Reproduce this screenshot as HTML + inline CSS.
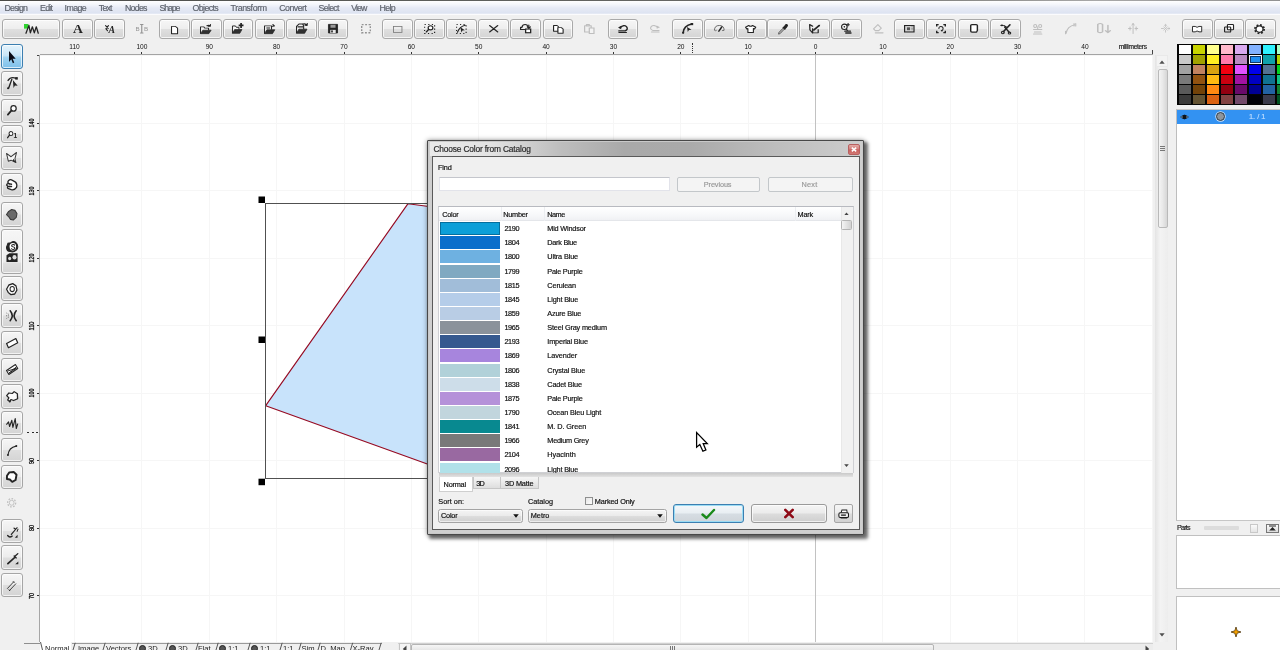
<!DOCTYPE html>
<html><head><meta charset="utf-8"><title>Choose Color from Catalog</title><style>
*{box-sizing:border-box}
html,body{margin:0;padding:0}
body{width:1280px;height:650px;overflow:hidden;position:relative;background:#f0f0f0;font-family:"Liberation Sans",sans-serif;font-size:9px;color:#222}
.a{position:absolute}
.menubar{left:-10px;top:1.2px;width:1300px;height:13.6px;background:linear-gradient(#ffffff 0%,#f4f6fb 25%,#e6eaf5 50%,#dde3f1 88%,#fbfbfd 93%,#fbfbfd 100%)}

.topstrip{left:-10px;top:-10px;width:1300px;height:11.3px;background:linear-gradient(90deg,#4a4a48 0%,#5a5c58 30%,#6a6a68 60%,#8a8a88 75%,#a8a8a8 85%,#909090 100%)}
.tb{position:absolute;top:19px;height:19.6px;width:30.6px;border:1px solid #a9a9a9;border-radius:3px;background:linear-gradient(#f6f6f6 0%,#eeeeee 48%,#dfdfdf 52%,#d4d4d4 100%);box-shadow:inset 0 0 0 1px rgba(255,255,255,.75)}
.tb svg,.ti svg{position:absolute;left:50%;top:50%;width:13px;height:13px;margin:-6.5px 0 0 -6.5px;overflow:visible}
.ti{position:absolute;top:19.5px;height:19px;width:30px;opacity:.32}
.lb{position:absolute;left:1.4px;width:21.4px;border:1px solid #a6a6a6;border-radius:3px;background:linear-gradient(#f6f6f6 0%,#ececec 48%,#dedede 52%,#d4d4d4 100%);box-shadow:inset 0 0 0 1px rgba(255,255,255,.7)}
.lb.sel{border-color:#3c7fb1;background:linear-gradient(#e6f4fc 0%,#c9e6f8 45%,#9fd2f0 55%,#7ec0ea 100%)}
.lb svg,.li svg{position:absolute;left:50%;top:50%;width:13px;height:13px;margin:-6.5px 0 0 -6.5px;overflow:visible}
.li{position:absolute;left:2px;width:21px;opacity:.3}
.rt{position:absolute;font-size:6.6px;color:#111;white-space:nowrap}
</style></head><body>
<div id="w" style="position:absolute;left:-10px;top:-10px;width:1300px;height:670px;background:#f0f0f0;filter:blur(0.4px)"><div style="position:absolute;left:10px;top:10px;width:1280px;height:650px">
<div class="a topstrip"></div>
<div class="a menubar"></div>
<div class="a" style="left:4.5px;top:3.2px;font-size:8.8px;line-height:10.12px;letter-spacing:-0.78px;color:#5f646e;white-space:nowrap;-webkit-text-stroke:0.18px currentColor;">Design</div>
<div class="a" style="left:40.0px;top:3.2px;font-size:8.8px;line-height:10.12px;letter-spacing:-0.72px;color:#5f646e;white-space:nowrap;-webkit-text-stroke:0.18px currentColor;">Edit</div>
<div class="a" style="left:64.5px;top:3.2px;font-size:8.8px;line-height:10.12px;letter-spacing:-0.55px;color:#5f646e;white-space:nowrap;-webkit-text-stroke:0.18px currentColor;">Image</div>
<div class="a" style="left:98.8px;top:3.2px;font-size:8.8px;line-height:10.12px;letter-spacing:-0.80px;color:#5f646e;white-space:nowrap;-webkit-text-stroke:0.18px currentColor;">Text</div>
<div class="a" style="left:125.0px;top:3.2px;font-size:8.8px;line-height:10.12px;letter-spacing:-0.73px;color:#5f646e;white-space:nowrap;-webkit-text-stroke:0.18px currentColor;">Nodes</div>
<div class="a" style="left:159.5px;top:3.2px;font-size:8.8px;line-height:10.12px;letter-spacing:-1.11px;color:#5f646e;white-space:nowrap;-webkit-text-stroke:0.18px currentColor;">Shape</div>
<div class="a" style="left:192.5px;top:3.2px;font-size:8.8px;line-height:10.12px;letter-spacing:-0.60px;color:#5f646e;white-space:nowrap;-webkit-text-stroke:0.18px currentColor;">Objects</div>
<div class="a" style="left:230.5px;top:3.2px;font-size:8.8px;line-height:10.12px;letter-spacing:-0.41px;color:#5f646e;white-space:nowrap;-webkit-text-stroke:0.18px currentColor;">Transform</div>
<div class="a" style="left:279.2px;top:3.2px;font-size:8.8px;line-height:10.12px;letter-spacing:-0.51px;color:#5f646e;white-space:nowrap;-webkit-text-stroke:0.18px currentColor;">Convert</div>
<div class="a" style="left:318.5px;top:3.2px;font-size:8.8px;line-height:10.12px;letter-spacing:-0.69px;color:#5f646e;white-space:nowrap;-webkit-text-stroke:0.18px currentColor;">Select</div>
<div class="a" style="left:351.2px;top:3.2px;font-size:8.8px;line-height:10.12px;letter-spacing:-0.89px;color:#5f646e;white-space:nowrap;-webkit-text-stroke:0.18px currentColor;">View</div>
<div class="a" style="left:379.5px;top:3.2px;font-size:8.8px;line-height:10.12px;letter-spacing:-0.62px;color:#5f646e;white-space:nowrap;-webkit-text-stroke:0.18px currentColor;">Help</div>
<div class="tb" style="left:2px;width:58px"></div>
<svg class="a" style="left:23.90px;top:23.70px;overflow:visible;" width="14.90" height="9.90" viewBox="0.5 2.5 15.15 10.65" preserveAspectRatio="none"><rect x="0.5" y="2.5" width="4.5" height="5" fill="#2fd22f"/><path d="M2.5,12.5 L5.5,4 L7,12 L9,5.5 L11,12 L13,5.5 L15,12.5" fill="none" stroke="#242424" stroke-width="1.3" stroke-linecap="round" stroke-linejoin="round"/></svg>
<div class="tb" style="left:62.1px"></div>
<svg class="a" style="left:73.10px;top:25.20px;overflow:visible;" width="9.70" height="7.70" viewBox="3.05 3.95 9.90 9.25" preserveAspectRatio="none"><text x="8" y="13.2" text-anchor="middle" font-family="Liberation Serif" font-weight="bold" font-size="14" fill="#242424">A</text></svg>
<div class="tb" style="left:94.2px"></div>
<svg class="a" style="left:105.00px;top:24.80px;overflow:visible;" width="9.70" height="8.10" viewBox="1.25 2.75 12.85 10.25" preserveAspectRatio="none"><text x="10.3" y="13" text-anchor="middle" font-family="Liberation Serif" font-style="italic" font-weight="bold" font-size="13" fill="#242424">A</text><path d="M2,3.5 L5.5,7 M5.8,3.5 L2.5,7.5 L4.5,10" fill="none" stroke="#242424" stroke-width="1.5" stroke-linecap="round"/></svg>
<svg class="a" style="left:136.30px;top:24.40px;overflow:visible;opacity:0.45;" width="11.80" height="9.40" viewBox="1.55 1.35 13.25 13.30" preserveAspectRatio="none"><path d="M8,2 V14 M6.5,2 H9.5 M6.5,14 H9.5" fill="none" stroke="#242424" stroke-width="1.3" stroke-linecap="round" stroke-linejoin="round"/><text x="1" y="11.5" font-family="Liberation Sans" font-size="7" fill="#242424">B</text><text x="10.5" y="11.5" font-family="Liberation Sans" font-size="7" fill="#242424">B</text></svg>
<div class="tb" style="left:159.1px"></div>
<svg class="a" style="left:171.00px;top:25.60px;overflow:visible;" width="7.10" height="8.20" viewBox="3.85 1.85 8.80 12.30" preserveAspectRatio="none"><path d="M4.5,2.5 H9.5 L12,5 V13.5 H4.5 Z" fill="#fff" stroke="#242424" stroke-width="1.3" stroke-linejoin="round"/></svg>
<div class="tb" style="left:191.0px"></div>
<svg class="a" style="left:200.40px;top:24.40px;overflow:visible;" width="11.50" height="10.00" viewBox="1.95 1.35 12.45 12.05" preserveAspectRatio="none"><path d="M2.5,13 V4.8 H6 L7,6.3 H11.2 V8.8" fill="#f4f4f4" stroke="#242424" stroke-width="1.1" stroke-linejoin="round"/><path d="M2.5,13 L5,8.8 H14 L11.5,13 Z" fill="#303030" stroke="#242424" stroke-width=".8" stroke-linejoin="round"/><path d="M9.5,3.5 Q11.5,2 13,4 M13,4 l0.3,-2 M13,4 l-2,0" fill="none" stroke="#242424" stroke-width="1.3" stroke-linecap="round" stroke-linejoin="round"/></svg>
<div class="tb" style="left:222.8px"></div>
<svg class="a" style="left:231.60px;top:23.10px;overflow:visible;" width="11.50" height="10.70" viewBox="1.45 1.5 13.35 11.90" preserveAspectRatio="none"><path d="M2,13 V4.8 H5.5 L6.5,6.3 H9.5 V8.8" fill="#f4f4f4" stroke="#242424" stroke-width="1.1" stroke-linejoin="round"/><path d="M2,13 L4.5,8.8 H13 L10.5,13 Z" fill="#303030" stroke="#242424" stroke-width=".8" stroke-linejoin="round"/><path d="M12,1.5 V7 M9.2,4.2 H14.8" fill="none" stroke="#242424" stroke-width="2"/></svg>
<div class="tb" style="left:254.6px"></div>
<svg class="a" style="left:263.80px;top:24.40px;overflow:visible;" width="11.20" height="10.00" viewBox="2.45 1.85 11.95 11.55" preserveAspectRatio="none"><path d="M3,13 V4 H10.5 V8.5" fill="#f4f4f4" stroke="#242424" stroke-width="1.1" stroke-linejoin="round"/><path d="M3,13 L5.5,8.5 H14 L11.5,13 Z" fill="#303030" stroke="#242424" stroke-width=".8" stroke-linejoin="round"/><rect x="5" y="5.3" width="4" height="2.4" fill="#888"/><path d="M12,2.5 l1.5,1.5 l-2,0.5" fill="none" stroke="#242424" stroke-width="1.3" stroke-linecap="round" stroke-linejoin="round"/></svg>
<div class="tb" style="left:286.1px"></div>
<svg class="a" style="left:295.60px;top:23.10px;overflow:visible;" width="11.90" height="10.70" viewBox="1.95 1.85 12.50 11.55" preserveAspectRatio="none"><path d="M2.5,13 V5.5 L5,3 H9 L10,5 V8.5" fill="#f4f4f4" stroke="#242424" stroke-width="1.1" stroke-linejoin="round"/><path d="M2.5,13 L5,8.5 H13.5 L11,13 Z" fill="#303030" stroke="#242424" stroke-width=".8" stroke-linejoin="round"/><path d="M4,6 H9.5 M9.5,3 Q12,2 13.5,4.5 M13.5,4.5 l0.3,-2 M13.5,4.5 l-2,-0.2" fill="none" stroke="#242424" stroke-width="1.3" stroke-linecap="round" stroke-linejoin="round"/></svg>
<div class="tb" style="left:317.7px"></div>
<svg class="a" style="left:328.10px;top:24.40px;overflow:visible;" width="10.00" height="9.40" viewBox="2.5 2.0 11.00 12.00" preserveAspectRatio="none"><path d="M3,2.5 H13 V13.5 H3 Z" fill="#242424" stroke="#242424" stroke-width="1" stroke-linejoin="round"/><rect x="5.2" y="3" width="5.6" height="3.8" fill="#9a9a9a"/><rect x="5" y="9.5" width="6" height="4" fill="#e8e8e8"/><rect x="6" y="10.2" width="1.8" height="2.6" fill="#242424"/></svg>
<svg class="a" style="left:360.60px;top:24.40px;overflow:visible;opacity:0.45;" width="10.00" height="9.40" viewBox="2.2 2.2 11.60 11.60" preserveAspectRatio="none"><rect x="3" y="3" width="10" height="10" fill="none" stroke="#242424" stroke-width="1.6" stroke-dasharray="2.2 1.8"/></svg>
<div class="tb" style="left:382.2px"></div>
<svg class="a" style="left:392.50px;top:25.60px;overflow:visible;" width="9.40" height="6.90" viewBox="3.0 4.0 10.50 8.50" preserveAspectRatio="none"><rect x="3.5" y="4.5" width="9.5" height="7.5" fill="none" stroke="#7c7c7c" stroke-width="1"/></svg>
<div class="tb" style="left:414.2px"></div>
<svg class="a" style="left:423.80px;top:23.80px;overflow:visible;" width="11.20" height="10.00" viewBox="1.85 1.85 12.30 12.30" preserveAspectRatio="none"><rect x="2.5" y="2.5" width="11" height="11" fill="none" stroke="#242424" stroke-width="1.3" stroke-dasharray="1.3 2.7"/><circle cx="9" cy="6.5" r="2.6" fill="#fff" stroke="#242424" stroke-width="1.3"/><path d="M7,8.5 L4.5,11.5" fill="none" stroke="#242424" stroke-width="1.7" stroke-linecap="round" stroke-linejoin="round"/></svg>
<div class="tb" style="left:446.0px"></div>
<svg class="a" style="left:455.60px;top:23.80px;overflow:visible;" width="10.70" height="10.00" viewBox="1.85 1.85 12.30 12.30" preserveAspectRatio="none"><rect x="2.5" y="2.5" width="11" height="11" fill="none" stroke="#242424" stroke-width="1.3" stroke-dasharray="1.3 2.7"/><path d="M3.5,12 Q6,5 12.5,3.5" fill="none" stroke="#242424" stroke-width="1.3" stroke-linecap="round" stroke-linejoin="round"/><path d="M7,6 L12,9.5 L9.3,9.9 L8,12.3 Z" fill="#242424"/></svg>
<div class="tb" style="left:478.2px"></div>
<svg class="a" style="left:489.40px;top:25.00px;overflow:visible;" width="9.40" height="7.50" viewBox="2.65 2.65 10.70 10.70" preserveAspectRatio="none"><path d="M3.5,3.5 L12.5,12.5 M12.5,3.5 L3.5,12.5" fill="none" stroke="#242424" stroke-width="1.7" stroke-linecap="round" stroke-linejoin="round"/></svg>
<div class="tb" style="left:510.2px"></div>
<svg class="a" style="left:520.00px;top:23.80px;overflow:visible;" width="11.30" height="9.30" viewBox="1.35 2.35 12.35 11.35" preserveAspectRatio="none"><path d="M2,9 V6.5 H3.5 Q4,3 7,3 Q9.5,3 10,5.5" fill="none" stroke="#242424" stroke-width="1.3" stroke-linecap="round" stroke-linejoin="round"/><path d="M2,9 H6.5" fill="none" stroke="#242424" stroke-width="1.3" stroke-linecap="round" stroke-linejoin="round"/><rect x="7.5" y="8.5" width="5.5" height="4.5" fill="#fff" stroke="#242424" stroke-width="1.4"/><path d="M11,3.5 V7.5 M9.3,5.8 L11,7.8 L12.7,5.8" fill="none" stroke="#242424" stroke-width="1.3" stroke-linecap="round" stroke-linejoin="round"/></svg>
<div class="tb" style="left:542.9px"></div>
<svg class="a" style="left:553.10px;top:25.00px;overflow:visible;" width="10.70" height="8.80" viewBox="1.85 1.85 12.30 12.30" preserveAspectRatio="none"><path d="M2.5,2.5 H6.5 L8,4 V10.5 H2.5 Z" fill="#fff" stroke="#242424" stroke-width="1.3" stroke-linejoin="round"/><path d="M7.5,5.5 H11.5 L13.5,7.5 V13.5 H7.5 Z" fill="#fff" stroke="#242424" stroke-width="1.3" stroke-linejoin="round"/></svg>
<svg class="a" style="left:584.40px;top:24.40px;overflow:visible;opacity:0.24;" width="10.60" height="10.00" viewBox="2.35 1.85 11.30 12.80" preserveAspectRatio="none"><path d="M3,4 H10 V12 H3 Z M5,2.5 H8 V4.5 H5 Z" fill="none" stroke="#242424" stroke-width="1.3" stroke-linecap="round" stroke-linejoin="round"/><path d="M8,7 H13 V14 H8 Z" fill="#fff" stroke="#242424" stroke-width="1.3"/></svg>
<div class="tb" style="left:607.7px"></div>
<svg class="a" style="left:618.10px;top:25.00px;overflow:visible;" width="10.00" height="8.10" viewBox="2.0 2.95 11.80 10.40" preserveAspectRatio="none"><path d="M4.5,6.5 Q9,2 12,5 Q14.5,8.5 10.5,10.5 H3" fill="none" stroke="#242424" stroke-width="1.7" stroke-linecap="round" stroke-linejoin="round"/><path d="M2,6.2 L6,4 L5.8,8.3 Z" fill="#242424"/><path d="M3,12.7 H12" fill="none" stroke="#242424" stroke-width="1.3" stroke-linecap="round" stroke-linejoin="round"/></svg>
<svg class="a" style="left:650.00px;top:25.00px;overflow:visible;opacity:0.24;" width="10.00" height="7.50" viewBox="2.4 3.15 11.60 10.20" preserveAspectRatio="none"><path d="M11.5,6.5 Q7,2 4,5 Q1.5,8.5 5.5,10.5 H13" fill="none" stroke="#242424" stroke-width="1.3" stroke-linecap="round" stroke-linejoin="round"/><path d="M14,6.2 L10,4 L10.2,8.3 Z" fill="#242424"/><path d="M4,12.7 H13" fill="none" stroke="#242424" stroke-width="1.3" stroke-linecap="round" stroke-linejoin="round"/></svg>
<div class="tb" style="left:672.3px"></div>
<svg class="a" style="left:681.90px;top:23.10px;overflow:visible;" width="11.20" height="10.70" viewBox="2.3 1.8 11.60 12.90" preserveAspectRatio="none"><path d="M3.5,13.5 Q4,5 12.5,3" fill="none" stroke="#242424" stroke-width="1.7" stroke-linecap="round" stroke-linejoin="round"/><circle cx="3.5" cy="13.5" r="1.2" fill="#242424"/><rect x="11.3" y="1.8" width="2.6" height="2.6" fill="#242424"/><path d="M7.5,6.5 L12.2,10 L9.5,10.2 L8.3,12.6 Z" fill="#242424"/></svg>
<div class="tb" style="left:704.2px"></div>
<svg class="a" style="left:713.80px;top:25.00px;overflow:visible;" width="10.60" height="6.90" viewBox="1.95 3.95 12.10 7.90" preserveAspectRatio="none"><path d="M2.5,10 Q2.5,4.5 8,4.5 Q13.5,4.5 13.5,10" fill="none" stroke="#666" stroke-width="1.1"/><path d="M2.5,10 Q4,11 5,10 M13.5,10 Q12,11 11,10" fill="none" stroke="#666" stroke-width="1"/><path d="M7.5,11 L10.8,6.2" fill="none" stroke="#242424" stroke-width="1.7" stroke-linecap="round" stroke-linejoin="round"/></svg>
<div class="tb" style="left:736.0px"></div>
<svg class="a" style="left:745.00px;top:25.00px;overflow:visible;" width="11.30" height="8.10" viewBox="0.8 2.3 14.40 11.40" preserveAspectRatio="none"><path d="M5.5,3 Q8,5 10.5,3 L14.5,5.5 L13,8 L11.5,7.2 V13 H4.5 V7.2 L3,8 L1.5,5.5 Z" fill="#fff" stroke="#242424" stroke-width="1.4" stroke-linejoin="round"/></svg>
<div class="tb" style="left:767.4px"></div>
<svg class="a" style="left:777.50px;top:23.80px;overflow:visible;" width="10.00" height="10.60" viewBox="2.45 1.5 12.35 12.55" preserveAspectRatio="none"><path d="M3,13.5 L3.5,11.5 L9,6 L10.5,7.5 L5,13 Z" fill="#a8a8a8" stroke="#444" stroke-width=".8"/><path d="M8.5,5 L11.5,8 M9.5,6 L12,2.6 Q13.6,1.8 14,3.2 Q14.2,4.2 10.8,7 Z" fill="#242424" stroke="#242424" stroke-width="1.6" stroke-linejoin="round"/></svg>
<div class="tb" style="left:799.2px"></div>
<svg class="a" style="left:808.80px;top:24.40px;overflow:visible;" width="11.20" height="9.40" viewBox="2.35 2.15 11.25 11.70" preserveAspectRatio="none"><path d="M3,2.8 L3.3,9.6 L6,13.2 M3,2.8 L6,5" fill="none" stroke="#242424" stroke-width="1.3" stroke-linejoin="round" stroke-linecap="round"/><path d="M6,7.4 V13.2 H11.6 V8.6" fill="none" stroke="#242424" stroke-width="1.2" stroke-linejoin="round"/><path d="M7.2,9.6 L12,4.6" fill="none" stroke="#242424" stroke-width="2" stroke-linecap="round"/><path d="M11.2,3.4 L13.6,3 L13.2,5.4 Z" fill="#242424"/></svg>
<div class="tb" style="left:831.2px"></div>
<svg class="a" style="left:840.60px;top:23.10px;overflow:visible;" width="10.70" height="10.70" viewBox="2.9 1.8 11.45 11.75" preserveAspectRatio="none"><circle cx="6.5" cy="6" r="3" fill="#fafafa" stroke="#242424" stroke-width="1.2"/><circle cx="6.5" cy="6" r="0.9" fill="#242424"/><path d="M10.5,1.8 V5.4 M8.8,3.6 H12.2" fill="none" stroke="#242424" stroke-width="1.1"/><path d="M8.6,8.4 L10,10.4" fill="none" stroke="#242424" stroke-width="1.3"/><path d="M7,10.8 H13 M8,12.8 H13.6" fill="none" stroke="#242424" stroke-width="1.5" stroke-linecap="round"/></svg>
<svg class="a" style="left:872.50px;top:24.40px;overflow:visible;opacity:0.24;" width="10.60" height="9.40" viewBox="2.35 2.35 12.30 10.80" preserveAspectRatio="none"><path d="M3,8 L8,3 L12,7 L9,10 H5 Z" fill="none" stroke="#242424" stroke-width="1.3" stroke-linecap="round" stroke-linejoin="round"/><path d="M5,12.5 H14" fill="none" stroke="#242424" stroke-width="1.3" stroke-linecap="round" stroke-linejoin="round"/></svg>
<div class="tb" style="left:894.2px"></div>
<svg class="a" style="left:903.80px;top:25.00px;overflow:visible;" width="10.60" height="7.50" viewBox="1.25 2.75 13.50 10.50" preserveAspectRatio="none"><rect x="2" y="3.5" width="12" height="9" fill="#d8d8d8" stroke="#242424" stroke-width="1.5"/><rect x="5" y="6" width="4" height="4" fill="#555"/><path d="M11.5,5 V11" stroke="#242424" stroke-width="1" stroke-dasharray="1 1"/></svg>
<div class="tb" style="left:925.8px"></div>
<svg class="a" style="left:935.60px;top:23.80px;overflow:visible;" width="10.00" height="9.30" viewBox="1.6 1.6 12.80 12.80" preserveAspectRatio="none"><path d="M2.5,5 V2.5 H5 M11,2.5 H13.5 V5 M13.5,11 V13.5 H11 M5,13.5 H2.5 V11" fill="none" stroke="#242424" stroke-width="1.8"/><path d="M5.3,8 Q5.3,5 8,5 Q10.7,5 10.7,8 Q10.7,10.5 8.5,10.8" fill="none" stroke="#242424" stroke-width="1.3" stroke-linecap="round" stroke-linejoin="round"/><path d="M9.5,9.3 L7.5,11 L9.8,12.2 Z" fill="#242424"/></svg>
<div class="tb" style="left:958.2px"></div>
<svg class="a" style="left:970.00px;top:24.40px;overflow:visible;" width="8.10" height="8.70" viewBox="3.15 1.65 9.70 12.70" preserveAspectRatio="none"><path d="M4,4 Q4,2.5 5.5,2.5 H10.5 Q12,2.5 12,4 V11 L11,13.5 H5.5 Q4,13.5 4,12 Z" fill="#fff" stroke="#242424" stroke-width="1.7" stroke-linejoin="round"/></svg>
<div class="tb" style="left:990.0px"></div>
<svg class="a" style="left:1000.00px;top:23.80px;overflow:visible;" width="11.30" height="10.60" viewBox="2.0 2.15 11.90 12.75" preserveAspectRatio="none"><path d="M2,4 Q4,1.5 6,4 Q4,6 2,4 Z" fill="#242424"/><path d="M6,4 L9,6" fill="none" stroke="#242424" stroke-width="1.3" stroke-linecap="round" stroke-linejoin="round"/><path d="M12.5,3 L5.5,11.5 M7,6 L11.5,12" fill="none" stroke="#242424" stroke-width="1.7" stroke-linecap="round" stroke-linejoin="round"/><circle cx="5" cy="12.5" r="1.5" fill="none" stroke="#242424" stroke-width="1.2"/><circle cx="12" cy="13" r="1.3" fill="none" stroke="#242424" stroke-width="1.2"/></svg>
<svg class="a" style="left:1032.50px;top:23.80px;overflow:visible;opacity:0.24;" width="9.40" height="10.60" viewBox="2.35 1.55 11.30 12.60" preserveAspectRatio="none"><circle cx="5" cy="4" r="1.8" fill="none" stroke="#242424" stroke-width="1.3" stroke-linecap="round" stroke-linejoin="round"/><circle cx="11" cy="4" r="1.8" fill="none" stroke="#242424" stroke-width="1.3" stroke-linecap="round" stroke-linejoin="round"/><path d="M3,8 H13 M4,11 H12 M3,13.5 H13 M8,5 V8" fill="none" stroke="#242424" stroke-width="1.3" stroke-linecap="round" stroke-linejoin="round"/></svg>
<svg class="a" style="left:1065.00px;top:23.10px;overflow:visible;opacity:0.24;" width="11.30" height="11.30" viewBox="1.35 0.85 13.30 13.80" preserveAspectRatio="none"><path d="M2.5,13.5 Q4,5 13,3" fill="none" stroke="#242424" stroke-width="1.3" stroke-linecap="round" stroke-linejoin="round"/><path d="M12,1.5 V4.5 M14,1.5 V4.5 M2,11 V14" fill="none" stroke="#242424" stroke-width="1.3" stroke-linecap="round" stroke-linejoin="round"/></svg>
<svg class="a" style="left:1097.20px;top:22.80px;overflow:visible;opacity:0.24;" width="14.10" height="10.20" viewBox="2.35 1.35 11.80 12.30" preserveAspectRatio="none"><path d="M3,3 Q5,1 7,3 V12 Q5,14 3,12 Z" fill="none" stroke="#242424" stroke-width="1.3" stroke-linecap="round" stroke-linejoin="round"/><path d="M11.5,4 V12.5 M9.5,10.5 L11.5,13 L13.5,10.5" fill="none" stroke="#242424" stroke-width="1.3" stroke-linecap="round" stroke-linejoin="round"/></svg>
<svg class="a" style="left:1128.40px;top:22.80px;overflow:visible;opacity:0.24;" width="10.20" height="11.00" viewBox="1.35 0.85 13.30 14.30" preserveAspectRatio="none"><path d="M8,1.5 V14.5 M6.5,3.5 L8,1.5 L9.5,3.5 M4,6 V10 M12,6 V10 M2,8 H5.5 M10.5,8 H14" fill="none" stroke="#242424" stroke-width="1.3" stroke-linecap="round" stroke-linejoin="round"/></svg>
<svg class="a" style="left:1160.50px;top:24.40px;overflow:visible;opacity:0.24;" width="9.30" height="8.60" viewBox="1.35 0.65 13.60 14.00" preserveAspectRatio="none"><path d="M8,2 V5 M8,11 V14 M2,8 H5 M11,8 H14 M5.5,5.5 L10.5,10.5 M10.5,5.5 L5.5,10.5 M6.5,2.8 L8,1.3 L9.5,2.8 M12.8,6.5 L14.3,8 L12.8,9.5" fill="none" stroke="#242424" stroke-width="1.3" stroke-linecap="round" stroke-linejoin="round"/></svg>
<div class="tb" style="left:1182.1px"></div>
<svg class="a" style="left:1191.70px;top:25.90px;overflow:visible;" width="10.20" height="6.30" viewBox="1.35 3.35 13.30 9.30" preserveAspectRatio="none"><path d="M2,4 H5.5 Q8,6.5 10.5,4 H14 V12 H10.5 Q8,9.5 5.5,12 H2 Z" fill="#fff" stroke="#242424" stroke-width="1.3" stroke-linejoin="round"/></svg>
<div class="tb" style="left:1213.6px"></div>
<svg class="a" style="left:1223.80px;top:24.40px;overflow:visible;" width="10.10" height="8.60" viewBox="1.8 1.8 12.40 12.40" preserveAspectRatio="none"><rect x="6" y="2.5" width="7.5" height="7.5" rx="1" fill="#fff" stroke="#242424" stroke-width="1.4"/><rect x="2.5" y="6" width="7.5" height="7.5" rx="1" fill="none" stroke="#242424" stroke-width="1.4"/></svg>
<div class="tb" style="left:1245.1px"></div>
<svg class="a" style="left:1254.20px;top:23.60px;overflow:visible;" width="11.00" height="10.20" viewBox="1.3 1.3 13.40 13.40" preserveAspectRatio="none"><circle cx="8" cy="8" r="4.3" fill="#fff" stroke="#242424" stroke-width="1.6"/><circle cx="8" cy="8" r="5.6" fill="none" stroke="#242424" stroke-width="2.2" stroke-dasharray="2.2 2.2"/></svg>
<div class="rt" style="left:64.5px;top:43.4px;width:20px;text-align:center">110</div>
<div class="a" style="left:74.0px;top:51.8px;width:1px;height:3.2px;background:#333"></div>
<div class="rt" style="left:131.9px;top:43.4px;width:20px;text-align:center">100</div>
<div class="a" style="left:141.4px;top:51.8px;width:1px;height:3.2px;background:#333"></div>
<div class="rt" style="left:199.3px;top:43.4px;width:20px;text-align:center">90</div>
<div class="a" style="left:208.8px;top:51.8px;width:1px;height:3.2px;background:#333"></div>
<div class="rt" style="left:266.6px;top:43.4px;width:20px;text-align:center">80</div>
<div class="a" style="left:276.1px;top:51.8px;width:1px;height:3.2px;background:#333"></div>
<div class="rt" style="left:334.0px;top:43.4px;width:20px;text-align:center">70</div>
<div class="a" style="left:343.5px;top:51.8px;width:1px;height:3.2px;background:#333"></div>
<div class="rt" style="left:401.3px;top:43.4px;width:20px;text-align:center">60</div>
<div class="a" style="left:410.8px;top:51.8px;width:1px;height:3.2px;background:#333"></div>
<div class="rt" style="left:468.7px;top:43.4px;width:20px;text-align:center">50</div>
<div class="a" style="left:478.2px;top:51.8px;width:1px;height:3.2px;background:#333"></div>
<div class="rt" style="left:536.1px;top:43.4px;width:20px;text-align:center">40</div>
<div class="a" style="left:545.6px;top:51.8px;width:1px;height:3.2px;background:#333"></div>
<div class="rt" style="left:603.4px;top:43.4px;width:20px;text-align:center">30</div>
<div class="a" style="left:612.9px;top:51.8px;width:1px;height:3.2px;background:#333"></div>
<div class="rt" style="left:670.8px;top:43.4px;width:20px;text-align:center">20</div>
<div class="a" style="left:680.3px;top:51.8px;width:1px;height:3.2px;background:#333"></div>
<div class="rt" style="left:738.1px;top:43.4px;width:20px;text-align:center">10</div>
<div class="a" style="left:747.6px;top:51.8px;width:1px;height:3.2px;background:#333"></div>
<div class="rt" style="left:805.5px;top:43.4px;width:20px;text-align:center">0</div>
<div class="a" style="left:815.0px;top:51.8px;width:1px;height:3.2px;background:#333"></div>
<div class="rt" style="left:872.9px;top:43.4px;width:20px;text-align:center">10</div>
<div class="a" style="left:882.4px;top:51.8px;width:1px;height:3.2px;background:#333"></div>
<div class="rt" style="left:940.2px;top:43.4px;width:20px;text-align:center">20</div>
<div class="a" style="left:949.7px;top:51.8px;width:1px;height:3.2px;background:#333"></div>
<div class="rt" style="left:1007.6px;top:43.4px;width:20px;text-align:center">30</div>
<div class="a" style="left:1017.1px;top:51.8px;width:1px;height:3.2px;background:#333"></div>
<div class="rt" style="left:1074.9px;top:43.4px;width:20px;text-align:center">40</div>
<div class="a" style="left:1084.4px;top:51.8px;width:1px;height:3.2px;background:#333"></div>
<div class="a" style="left:1118.8px;top:42.8px;font-size:6.6px;line-height:7.59px;letter-spacing:-0.33px;color:#222;white-space:nowrap;-webkit-text-stroke:0.18px currentColor;">millimeters</div>
<div class="a" style="left:1152px;top:50px;width:1px;height:4px;background:#444"></div>
<div class="a" style="left:692px;top:43px;width:0;height:10px;border-left:1px dotted #333"></div>
<div class="a" style="left:40px;top:54px;width:1113px;height:1px;background:#a4a4a4"></div>
<svg class="a" style="left:26px;top:115.4px;overflow:visible" width="10" height="16"><text transform="translate(7.9,8) rotate(-90)" text-anchor="middle" font-family="Liberation Sans" font-size="7.2" textLength="9.0" lengthAdjust="spacingAndGlyphs" fill="#000" stroke="#000" stroke-width="0.25">140</text></svg>
<div class="a" style="left:36.5px;top:122.9px;width:3.5px;height:1px;background:#333"></div>
<svg class="a" style="left:26px;top:182.9px;overflow:visible" width="10" height="16"><text transform="translate(7.9,8) rotate(-90)" text-anchor="middle" font-family="Liberation Sans" font-size="7.2" textLength="9.0" lengthAdjust="spacingAndGlyphs" fill="#000" stroke="#000" stroke-width="0.25">130</text></svg>
<div class="a" style="left:36.5px;top:190.4px;width:3.5px;height:1px;background:#333"></div>
<svg class="a" style="left:26px;top:250.3px;overflow:visible" width="10" height="16"><text transform="translate(7.9,8) rotate(-90)" text-anchor="middle" font-family="Liberation Sans" font-size="7.2" textLength="9.0" lengthAdjust="spacingAndGlyphs" fill="#000" stroke="#000" stroke-width="0.25">120</text></svg>
<div class="a" style="left:36.5px;top:257.8px;width:3.5px;height:1px;background:#333"></div>
<svg class="a" style="left:26px;top:317.8px;overflow:visible" width="10" height="16"><text transform="translate(7.9,8) rotate(-90)" text-anchor="middle" font-family="Liberation Sans" font-size="7.2" textLength="9.0" lengthAdjust="spacingAndGlyphs" fill="#000" stroke="#000" stroke-width="0.25">110</text></svg>
<div class="a" style="left:36.5px;top:325.3px;width:3.5px;height:1px;background:#333"></div>
<svg class="a" style="left:26px;top:385.3px;overflow:visible" width="10" height="16"><text transform="translate(7.9,8) rotate(-90)" text-anchor="middle" font-family="Liberation Sans" font-size="7.2" textLength="9.0" lengthAdjust="spacingAndGlyphs" fill="#000" stroke="#000" stroke-width="0.25">100</text></svg>
<div class="a" style="left:36.5px;top:392.8px;width:3.5px;height:1px;background:#333"></div>
<svg class="a" style="left:26px;top:452.8px;overflow:visible" width="10" height="16"><text transform="translate(7.9,8) rotate(-90)" text-anchor="middle" font-family="Liberation Sans" font-size="7.2" textLength="6.2" lengthAdjust="spacingAndGlyphs" fill="#000" stroke="#000" stroke-width="0.25">90</text></svg>
<div class="a" style="left:36.5px;top:460.2px;width:3.5px;height:1px;background:#333"></div>
<svg class="a" style="left:26px;top:520.2px;overflow:visible" width="10" height="16"><text transform="translate(7.9,8) rotate(-90)" text-anchor="middle" font-family="Liberation Sans" font-size="7.2" textLength="6.2" lengthAdjust="spacingAndGlyphs" fill="#000" stroke="#000" stroke-width="0.25">80</text></svg>
<div class="a" style="left:36.5px;top:527.7px;width:3.5px;height:1px;background:#333"></div>
<svg class="a" style="left:26px;top:587.7px;overflow:visible" width="10" height="16"><text transform="translate(7.9,8) rotate(-90)" text-anchor="middle" font-family="Liberation Sans" font-size="7.2" textLength="6.2" lengthAdjust="spacingAndGlyphs" fill="#000" stroke="#000" stroke-width="0.25">70</text></svg>
<div class="a" style="left:36.5px;top:595.2px;width:3.5px;height:1px;background:#333"></div>
<div class="a" style="left:26.5px;top:432px;width:12.5px;height:1px;background:repeating-linear-gradient(90deg,#2a2a2a 0,#2a2a2a 2.2px,transparent 2.2px,transparent 4.6px)"></div>
<div class="a" style="left:37px;top:55px;width:3px;height:1px;background:#444"></div>
<div class="a" id="canvas" style="left:40px;top:55px;width:1112.5px;height:586.5px;background:#fff;overflow:hidden">
<div class="a" style="left:-33.3px;top:0;width:1px;height:587px;background:#f6f6f6"></div><div class="a" style="left:34.0px;top:0;width:1px;height:587px;background:#f6f6f6"></div><div class="a" style="left:101.4px;top:0;width:1px;height:587px;background:#f6f6f6"></div><div class="a" style="left:168.8px;top:0;width:1px;height:587px;background:#f6f6f6"></div><div class="a" style="left:236.1px;top:0;width:1px;height:587px;background:#f6f6f6"></div><div class="a" style="left:303.5px;top:0;width:1px;height:587px;background:#f6f6f6"></div><div class="a" style="left:370.8px;top:0;width:1px;height:587px;background:#f6f6f6"></div><div class="a" style="left:438.2px;top:0;width:1px;height:587px;background:#f6f6f6"></div><div class="a" style="left:505.6px;top:0;width:1px;height:587px;background:#f6f6f6"></div><div class="a" style="left:572.9px;top:0;width:1px;height:587px;background:#f6f6f6"></div><div class="a" style="left:640.3px;top:0;width:1px;height:587px;background:#f6f6f6"></div><div class="a" style="left:707.6px;top:0;width:1px;height:587px;background:#f6f6f6"></div><div class="a" style="left:842.4px;top:0;width:1px;height:587px;background:#f6f6f6"></div><div class="a" style="left:909.7px;top:0;width:1px;height:587px;background:#f6f6f6"></div><div class="a" style="left:977.1px;top:0;width:1px;height:587px;background:#f6f6f6"></div><div class="a" style="left:1044.4px;top:0;width:1px;height:587px;background:#f6f6f6"></div><div class="a" style="left:1111.8px;top:0;width:1px;height:587px;background:#f6f6f6"></div><div class="a" style="left:0;top:0.4px;width:1113px;height:1px;background:#f6f6f6"></div><div class="a" style="left:0;top:67.9px;width:1113px;height:1px;background:#f6f6f6"></div><div class="a" style="left:0;top:135.4px;width:1113px;height:1px;background:#f6f6f6"></div><div class="a" style="left:0;top:202.8px;width:1113px;height:1px;background:#f6f6f6"></div><div class="a" style="left:0;top:270.3px;width:1113px;height:1px;background:#f6f6f6"></div><div class="a" style="left:0;top:337.8px;width:1113px;height:1px;background:#f6f6f6"></div><div class="a" style="left:0;top:405.2px;width:1113px;height:1px;background:#f6f6f6"></div><div class="a" style="left:0;top:472.7px;width:1113px;height:1px;background:#f6f6f6"></div><div class="a" style="left:0;top:540.2px;width:1113px;height:1px;background:#f6f6f6"></div><div class="a" style="left:0;top:607.7px;width:1113px;height:1px;background:#f6f6f6"></div>
<div class="a" style="left:775.0px;top:0;width:1px;height:587px;background:#c2c2c2"></div>
<svg class="a" style="left:0;top:0" width="1113" height="587" viewBox="40 55 1113 587"><polygon points="408,203.7 480,213.2 480,483 265.7,405.7" fill="#c8e3fb" stroke="#960a22" stroke-width="1.15" stroke-linejoin="round"/><rect x="265.5" y="203.5" width="300" height="275" fill="none" stroke="#505050" stroke-width="1"/><rect x="258.5" y="196.5" width="6.5" height="6.5" fill="#000"/><rect x="258.5" y="336.5" width="6.5" height="6.5" fill="#000"/><rect x="258.5" y="478.7" width="6.5" height="6.5" fill="#000"/></svg>
</div>
<div class="a" style="left:39px;top:55px;width:1px;height:587px;background:#a6a6a6"></div>
<div class="lb sel" style="top:44px;height:25px"></div>
<svg class="a" style="left:8.60px;top:51.10px;overflow:visible;" width="6.70" height="12.30" viewBox="4.5 1.5 8.30 13.00" preserveAspectRatio="none"><path d="M4.5,1.5 V13 L7.3,10.3 L9.3,14.5 L11,13.7 L9,9.7 H12.8 Z" fill="#0a0a14"/></svg>
<div class="lb" style="top:71.3px;height:24.7px"></div>
<svg class="a" style="left:6.90px;top:76.90px;overflow:visible;" width="10.80" height="12.30" viewBox="2.5 2.2 10.10 11.80" preserveAspectRatio="none"><path d="M3.5,5.5 Q6,1.5 11,3.5" fill="none" stroke="#242424" stroke-width="1.3" stroke-linecap="round" stroke-linejoin="round"/><rect x="10.2" y="2.3" width="2.4" height="2.4" fill="#242424"/><path d="M7,4.5 L4,13" fill="none" stroke="#242424" stroke-width="1.3" stroke-linecap="round" stroke-linejoin="round"/><path d="M8,5 L12.5,10.5 L9.9,10.3 L8.6,12.8 Z" fill="#242424"/><circle cx="3.5" cy="13" r="1" fill="#242424"/></svg>
<div class="lb" style="top:98.5px;height:24.2px"></div>
<svg class="a" style="left:6.90px;top:105.20px;overflow:visible;" width="9.80" height="10.60" viewBox="1.9 1.45 12.15 12.65" preserveAspectRatio="none"><circle cx="10" cy="5.5" r="3.3" fill="#fff" stroke="#242424" stroke-width="1.5"/><path d="M7.5,8 L3,13" fill="none" stroke="#242424" stroke-width="2.2" stroke-linecap="round"/></svg>
<div class="lb" style="top:125.4px;height:18px"></div>
<svg class="a" style="left:6.60px;top:130.60px;overflow:visible;" width="10.10" height="7.40" viewBox="0.65 2.75 13.60 9.60" preserveAspectRatio="none"><circle cx="6" cy="6" r="2.6" fill="#fff" stroke="#242424" stroke-width="1.3"/><path d="M4,8 L1.5,11.5" fill="none" stroke="#242424" stroke-width="1.7" stroke-linecap="round" stroke-linejoin="round"/><text x="9.5" y="12" font-family="Liberation Sans" font-weight="bold" font-size="9" fill="#242424">1</text></svg>
<div class="lb" style="top:146px;height:24.3px"></div>
<svg class="a" style="left:6.20px;top:152.00px;overflow:visible;" width="11.00" height="11.10" viewBox="1.95 2.45 12.10 11.90" preserveAspectRatio="none"><path d="M2.5,4 L7.5,7.5 L13.5,3 L11.8,9.5 L12.8,13.8 L7.5,11.2 L4.5,12.3 Z" fill="#f6f6f6" stroke="#3a3a3a" stroke-width="1.1" stroke-linejoin="round"/><path d="M10.2,9.8 L12.8,13.8 L9.2,12" fill="#242424"/></svg>
<div class="lb" style="top:172.5px;height:24.5px"></div>
<svg class="a" style="left:6.20px;top:179.10px;overflow:visible;" width="11.50" height="11.60" viewBox="2.75 2.85 11.45 11.20" preserveAspectRatio="none"><path d="M5.2,4.6 Q7,2.6 9.2,4.2 L12.2,5.8 Q14.2,8 13.2,11 Q11.2,14 8,13.2 L5.2,12.2 Q3.6,11.6 4.6,10.2 L6.4,10.1 Q3,9.6 3.5,8.1 Q4,7 6.2,7.5 Q3.6,6.4 5.2,4.6 Z" fill="#fff" stroke="#242424" stroke-width="1.3" stroke-linejoin="round"/><path d="M6.2,7.5 L8.3,7.9 M6.4,10.1 L8.3,10.1" fill="none" stroke="#242424" stroke-width="1.3" stroke-linecap="round" stroke-linejoin="round"/></svg>
<div class="lb" style="top:202px;height:24.5px"></div>
<svg class="a" style="left:6.20px;top:208.60px;overflow:visible;" width="11.50" height="11.60" viewBox="1.75 2.45 12.40 11.30" preserveAspectRatio="none"><path d="M2.3,8 L4.6,4.8 L7.8,3 L11.4,3.8 L13.6,7 L12.8,10.6 L9.6,13.2 L6.6,12.6 L5,10.4 Z" fill="#6a6a6a" stroke="#3a3a3a" stroke-width="1.1" stroke-linejoin="round"/></svg>
<div class="lb" style="top:229px;height:45px;background:linear-gradient(#f6f6f6 0%,#ececec 74%,#dedede 78%,#d4d4d4 100%)"></div>
<svg class="a" style="left:6.20px;top:240.60px;overflow:visible;" width="12.30" height="20.90" viewBox="1.5 -4.65 12.75 19.15" preserveAspectRatio="none"><g transform="translate(0,-6)"><path d="M2,7 L3.5,3.5 L6.5,3 Q10,0.5 12.5,3.5 Q15,7 12.5,9.5 Q10,12 6,11 Q2,11 2,7 Z" fill="#242424" stroke="#242424" stroke-width="1"/><circle cx="8.6" cy="6.6" r="3.4" fill="#fff"/><text x="6.4" y="9.3" font-family="Liberation Sans" font-weight="bold" font-size="7.5" fill="#242424">S</text></g><g transform="translate(0,3.5)"><path d="M2,5 L5,3 H13.5 V11 H2 Z" fill="#242424"/><circle cx="5.3" cy="8" r="1.6" fill="#ddd"/><circle cx="10.3" cy="6.8" r="2.1" fill="#ddd"/></g></svg>
<div class="lb" style="top:276.3px;height:24.7px"></div>
<svg class="a" style="left:6.20px;top:282.50px;overflow:visible;" width="11.50" height="12.30" viewBox="1.55 2.35 12.70 11.50" preserveAspectRatio="none"><path d="M2.2,8 L4.8,4.2 L9,3 L12.6,5 L13.6,9 L11.2,12.6 L7,13.2 L4,11.2 Z" fill="#fff" stroke="#242424" stroke-width="1.3" stroke-linejoin="round"/><circle cx="8.4" cy="8" r="2.4" fill="none" stroke="#242424" stroke-width="1.1"/></svg>
<div class="lb" style="top:303.4px;height:24.6px"></div>
<svg class="a" style="left:6.20px;top:309.60px;overflow:visible;" width="11.00" height="11.50" viewBox="1.5 1.65 11.85 12.70" preserveAspectRatio="none"><path d="M6,2.5 Q10.5,8 6,13.5 M12.5,2.5 Q8,8 12.5,13.5" fill="none" stroke="#242424" stroke-width="1.7" stroke-linecap="round" stroke-linejoin="round"/><path d="M2,5 L4.5,6.5 M1.5,8 H4.5 M2,11 L4.5,9.5" fill="none" stroke="#666" stroke-width="1" stroke-dasharray="1 1"/></svg>
<div class="lb" style="top:330.5px;height:24.4px"></div>
<svg class="a" style="left:6.20px;top:337.90px;overflow:visible;" width="12.30" height="10.30" viewBox="1.35 2.85 13.30 11.30" preserveAspectRatio="none"><path d="M2,9 L12,3.5 L14,8 L4,13.5 Z" fill="#fff" stroke="#242424" stroke-width="1.3" stroke-linejoin="round"/></svg>
<div class="lb" style="top:357.6px;height:24.2px"></div>
<svg class="a" style="left:6.20px;top:363.70px;overflow:visible;" width="12.30" height="11.10" viewBox="1.45 2.95 13.10 11.10" preserveAspectRatio="none"><path d="M2,9.5 L11.5,3.5 L14,7.5 L4.5,13.5 Z" fill="#fff" stroke="#242424" stroke-width="1.1" stroke-linejoin="round"/><path d="M3.2,10 L12.6,7.2 L4.2,12.4 L12.8,5.6" fill="none" stroke="#242424" stroke-width="1" stroke-linejoin="round"/></svg>
<div class="lb" style="top:384px;height:24.8px"></div>
<svg class="a" style="left:6.20px;top:390.80px;overflow:visible;" width="12.30" height="11.50" viewBox="2.9 2.6 10.70 11.10" preserveAspectRatio="none"><path d="M3.5,7 L5.5,4.5 L8.5,5 L10,3.2 L12.8,5.2 L13,10 L9.5,11.8 L7.2,10.8 L6.2,12.8 L4.4,11.4 L5.4,9.2 Z" fill="#fafafa" stroke="#242424" stroke-width="1.15" stroke-linejoin="round"/><circle cx="6.2" cy="12.8" r="0.9" fill="#242424"/></svg>
<div class="lb" style="top:411.2px;height:24px"></div>
<svg class="a" style="left:6.20px;top:417.80px;overflow:visible;" width="12.30" height="11.10" viewBox="2.1 3.45 11.60 10.10" preserveAspectRatio="none"><path d="M2.5,9.5 L4.5,7 L5.5,11.2 L7.6,5.5 L8.6,12 L10.8,4 L11.8,13 L13.2,8.5" fill="none" stroke="#242424" stroke-width="1.05" stroke-linejoin="round"/></svg>
<div class="lb" style="top:438.3px;height:24px"></div>
<svg class="a" style="left:6.90px;top:445.00px;overflow:visible;" width="10.30" height="11.00" viewBox="1.9 2.4 12.00 11.70" preserveAspectRatio="none"><path d="M3,13 Q4,5 12.5,3.5" fill="none" stroke="#242424" stroke-width="1.3" stroke-linecap="round"/><circle cx="3" cy="13" r="1.1" fill="#242424"/><circle cx="12.8" cy="3.5" r="1.1" fill="#242424"/></svg>
<div class="lb" style="top:465.4px;height:24px"></div>
<svg class="a" style="left:6.20px;top:471.30px;overflow:visible;" width="11.50" height="11.80" viewBox="2.0 2.0 12.00 12.50" preserveAspectRatio="none"><path d="M3,7 L5.5,3.5 L10,3 L13,6 L12,11.5 L8.5,13.5 L6,11 L3,10.5 Z" fill="#fff" stroke="#242424" stroke-width="2" stroke-linejoin="round"/></svg>
<svg class="a" style="left:7.40px;top:498.40px;overflow:visible;opacity:0.24;" width="9.30" height="9.60" viewBox="2.2 2.2 11.60 11.60" preserveAspectRatio="none"><circle cx="8" cy="8" r="3" fill="none" stroke="#242424" stroke-width="1.1"/><circle cx="8" cy="8" r="5" fill="none" stroke="#242424" stroke-width="1.6" stroke-dasharray="2 1.8"/></svg>
<div class="lb" style="top:519px;height:24.2px"></div>
<svg class="a" style="left:6.50px;top:526.50px;overflow:visible;" width="11.50" height="10.80" viewBox="1.3 1.95 12.75 10.15" preserveAspectRatio="none"><path d="M12.5,2.5 L6,9 M11,4 L9,3 M12.5,6 L13.5,4" fill="none" stroke="#242424" stroke-width="1.1" stroke-linecap="round"/><path d="M2,10 Q4,12.5 7,10.5" fill="none" stroke="#242424" stroke-width="1.4" stroke-linecap="round"/><path d="M10,12 L13,12 L13,9.2 Z" fill="#242424"/></svg>
<div class="lb" style="top:545.4px;height:24.8px"></div>
<svg class="a" style="left:6.50px;top:553.00px;overflow:visible;" width="11.50" height="11.50" viewBox="2.15 1.35 11.00 12.00" preserveAspectRatio="none"><path d="M12.5,2 L9.5,5 M11,6.5 L9,4.5" fill="none" stroke="#242424" stroke-width="1.3" stroke-linecap="round" stroke-linejoin="round"/><path d="M9.5,6 L3,12.5" fill="none" stroke="#242424" stroke-width="1.7" stroke-linecap="round"/><path d="M10,13 L13,13 L13,10.2 Z" fill="#242424"/></svg>
<div class="lb" style="top:572.6px;height:24.8px"></div>
<svg class="a" style="left:7.40px;top:580.70px;overflow:visible;" width="9.20" height="10.30" viewBox="2.45 2.15 11.60 12.20" preserveAspectRatio="none"><path d="M3,11 L11,3 M5.5,13.5 L13.5,5.5" fill="none" stroke="#242424" stroke-width="1.05" stroke-linecap="round"/><path d="M10,2.5 L12,4.5 M4.5,12 L6.5,14" fill="none" stroke="#242424" stroke-width="1"/></svg>
<div class="a" style="left:1153px;top:55px;width:23px;height:595px;background:#f0f0f0"></div>
<div class="a" style="left:1155px;top:55px;width:13px;height:587px;background:linear-gradient(90deg,#e4e4e4,#f3f3f3 40%,#ededed)"></div>
<div class="a" style="left:1155.5px;top:55px;width:12.5px;height:12px;background:#f3f3f3;border:1px solid #e9e9e9"></div>
<svg class="a" style="left:1159px;top:60px" width="6" height="4"><path d="M0.3,3.7 L3,0.5 L5.7,3.7 Z" fill="#505050"/></svg>
<div class="a" style="left:1157.5px;top:69px;width:10.5px;height:159px;border:1px solid #b9b9b9;border-radius:2px;background:linear-gradient(90deg,#f4f4f4 0%,#e9e9e9 45%,#d6d6d6 100%)"></div>
<div class="a" style="left:1160px;top:145.5px;width:5px;height:5px;border-top:1px solid #777;border-bottom:1px solid #777"><div style="margin-top:1px;height:1px;background:#777"></div></div>
<svg class="a" style="left:1159px;top:632.5px" width="6" height="4"><path d="M0.3,0.3 L3,3.5 L5.7,0.3 Z" fill="#505050"/></svg>
<div class="a" style="left:24px;top:641.5px;width:1129px;height:9px;background:#f0f0f0"></div>
<div class="a" style="left:24px;top:642.5px;width:16px;height:1px;background:#8e8e8e"></div>
<div class="a" style="left:72px;top:642.5px;width:310px;height:1px;background:#9a9a9a"></div>
<div class="a" style="left:40px;top:641.5px;width:31px;height:9px;background:#fff"></div>
<div class="a" style="left:45px;top:644.3px;font-size:7.6px;color:#222;white-space:nowrap">Normal</div>
<div class="a" style="left:78px;top:644.3px;font-size:7.6px;color:#222;white-space:nowrap">Image</div>
<div class="a" style="left:106px;top:644.3px;font-size:7.6px;color:#222;white-space:nowrap">Vectors</div>
<div class="a" style="left:148px;top:644.3px;font-size:7.6px;color:#222;white-space:nowrap">3D</div>
<div class="a" style="left:139px;top:644.5px;width:7px;height:7px;border-radius:50%;background:#555;border:1px solid #222"></div>
<div class="a" style="left:178px;top:644.3px;font-size:7.6px;color:#222;white-space:nowrap">3D</div>
<div class="a" style="left:169px;top:644.5px;width:7px;height:7px;border-radius:50%;background:#555;border:1px solid #222"></div>
<div class="a" style="left:198px;top:644.3px;font-size:7.6px;color:#222;white-space:nowrap">Flat</div>
<div class="a" style="left:228px;top:644.3px;font-size:7.6px;color:#222;white-space:nowrap">1:1</div>
<div class="a" style="left:219px;top:644.5px;width:7px;height:7px;border-radius:50%;background:#555;border:1px solid #222"></div>
<div class="a" style="left:260px;top:644.3px;font-size:7.6px;color:#222;white-space:nowrap">1:1</div>
<div class="a" style="left:251px;top:644.5px;width:7px;height:7px;border-radius:50%;background:#555;border:1px solid #222"></div>
<div class="a" style="left:283px;top:644.3px;font-size:7.6px;color:#222;white-space:nowrap">1:1</div>
<div class="a" style="left:301.5px;top:644.3px;font-size:7.6px;color:#222;white-space:nowrap">Sim</div>
<div class="a" style="left:320.5px;top:644.3px;font-size:7.6px;color:#222;white-space:nowrap">D. Map</div>
<div class="a" style="left:352.5px;top:644.3px;font-size:7.6px;color:#222;white-space:nowrap">X-Ray</div>
<svg class="a" style="left:0;top:642px" width="420" height="8"><path d="M75.2,0.8 L73,8" stroke="#555" stroke-width="1" fill="none"/><path d="M105.2,0.8 L103,8" stroke="#555" stroke-width="1" fill="none"/><path d="M138.2,0.8 L136,8" stroke="#555" stroke-width="1" fill="none"/><path d="M168.2,0.8 L166,8" stroke="#555" stroke-width="1" fill="none"/><path d="M198.2,0.8 L196,8" stroke="#555" stroke-width="1" fill="none"/><path d="M218.2,0.8 L216,8" stroke="#555" stroke-width="1" fill="none"/><path d="M250.2,0.8 L248,8" stroke="#555" stroke-width="1" fill="none"/><path d="M282.2,0.8 L280,8" stroke="#555" stroke-width="1" fill="none"/><path d="M301.2,0.8 L299,8" stroke="#555" stroke-width="1" fill="none"/><path d="M320.2,0.8 L318,8" stroke="#555" stroke-width="1" fill="none"/><path d="M352.7,0.8 L350.5,8" stroke="#555" stroke-width="1" fill="none"/><path d="M381.2,0.8 L379,8" stroke="#555" stroke-width="1" fill="none"/><path d="M40.5,0 L42.5,8" stroke="#555" stroke-width="1" fill="none"/></svg>
<div class="a" style="left:398px;top:643px;width:755px;height:7px;background:#ececec;border-top:1px solid #d0d0d0"></div>
<div class="a" style="left:399px;top:643px;width:11.5px;height:8px;border:1px solid #c4c4c4;background:#f4f4f4"></div>
<svg class="a" style="left:402px;top:645px" width="5" height="6"><path d="M4.5,0.5 L0.8,4 L4.5,7.5 Z" fill="#444"/></svg>
<div class="a" style="left:411px;top:643.5px;width:523px;height:8px;border:1px solid #b4b4b4;border-radius:2px;background:linear-gradient(#f6f6f6,#e4e4e4)"></div>
<div class="a" style="left:670px;top:646px;width:5px;height:5px;border-left:1px solid #777;border-right:1px solid #777"><div style="margin-left:1px;width:1px;height:5px;background:#777"></div></div>
<svg class="a" style="left:1145px;top:645px" width="5" height="6"><path d="M0.5,0.5 L4.2,4 L0.5,7.5 Z" fill="#444"/></svg>
<div class="a" style="left:1176px;top:40px;width:104px;height:610px;background:#f0f0f0"></div>
<div class="a" style="left:1177px;top:44px;width:103px;height:61px;background:#050505;overflow:hidden">
<div class="a" style="left:1.5px;top:1.1px;width:12.3px;height:8.5px;background:#ffffff"></div>
<div class="a" style="left:15.6px;top:1.1px;width:12.3px;height:8.5px;background:#c9d400"></div>
<div class="a" style="left:29.7px;top:1.1px;width:12.3px;height:8.5px;background:#ffff8e"></div>
<div class="a" style="left:43.8px;top:1.1px;width:12.3px;height:8.5px;background:#ffb9cb"></div>
<div class="a" style="left:57.9px;top:1.1px;width:12.3px;height:8.5px;background:#d9aaf0"></div>
<div class="a" style="left:72.0px;top:1.1px;width:12.3px;height:8.5px;background:#82b2ff"></div>
<div class="a" style="left:86.1px;top:1.1px;width:12.3px;height:8.5px;background:#2ff2ff"></div>
<div class="a" style="left:100.2px;top:1.1px;width:12.3px;height:8.5px;background:#a8ffc8"></div>
<div class="a" style="left:1.5px;top:11.1px;width:12.3px;height:8.5px;background:#c9c9c9"></div>
<div class="a" style="left:15.6px;top:11.1px;width:12.3px;height:8.5px;background:#a2a200"></div>
<div class="a" style="left:29.7px;top:11.1px;width:12.3px;height:8.5px;background:#ffef22"></div>
<div class="a" style="left:43.8px;top:11.1px;width:12.3px;height:8.5px;background:#ff7aaa"></div>
<div class="a" style="left:57.9px;top:11.1px;width:12.3px;height:8.5px;background:#b98ac2"></div>
<div class="a" style="left:72.0px;top:11.1px;width:12.3px;height:8.5px;background:#1f8ff2"></div>
<div class="a" style="left:86.1px;top:11.1px;width:12.3px;height:8.5px;background:#0fa2aa"></div>
<div class="a" style="left:100.2px;top:11.1px;width:12.3px;height:8.5px;background:#b4d400"></div>
<div class="a" style="left:1.5px;top:21.1px;width:12.3px;height:8.5px;background:#a2a2a2"></div>
<div class="a" style="left:15.6px;top:21.1px;width:12.3px;height:8.5px;background:#c2825f"></div>
<div class="a" style="left:29.7px;top:21.1px;width:12.3px;height:8.5px;background:#d9a212"></div>
<div class="a" style="left:43.8px;top:21.1px;width:12.3px;height:8.5px;background:#f20010"></div>
<div class="a" style="left:57.9px;top:21.1px;width:12.3px;height:8.5px;background:#e252ff"></div>
<div class="a" style="left:72.0px;top:21.1px;width:12.3px;height:8.5px;background:#0000ea"></div>
<div class="a" style="left:86.1px;top:21.1px;width:12.3px;height:8.5px;background:#527292"></div>
<div class="a" style="left:100.2px;top:21.1px;width:12.3px;height:8.5px;background:#00d222"></div>
<div class="a" style="left:1.5px;top:31.1px;width:12.3px;height:8.5px;background:#7a7a7a"></div>
<div class="a" style="left:15.6px;top:31.1px;width:12.3px;height:8.5px;background:#925210"></div>
<div class="a" style="left:29.7px;top:31.1px;width:12.3px;height:8.5px;background:#ffba12"></div>
<div class="a" style="left:43.8px;top:31.1px;width:12.3px;height:8.5px;background:#ca0010"></div>
<div class="a" style="left:57.9px;top:31.1px;width:12.3px;height:8.5px;background:#a212a2"></div>
<div class="a" style="left:72.0px;top:31.1px;width:12.3px;height:8.5px;background:#0000c2"></div>
<div class="a" style="left:86.1px;top:31.1px;width:12.3px;height:8.5px;background:#107292"></div>
<div class="a" style="left:100.2px;top:31.1px;width:12.3px;height:8.5px;background:#10c282"></div>
<div class="a" style="left:1.5px;top:41.1px;width:12.3px;height:8.5px;background:#5a5a5a"></div>
<div class="a" style="left:15.6px;top:41.1px;width:12.3px;height:8.5px;background:#724208"></div>
<div class="a" style="left:29.7px;top:41.1px;width:12.3px;height:8.5px;background:#ff8a12"></div>
<div class="a" style="left:43.8px;top:41.1px;width:12.3px;height:8.5px;background:#920010"></div>
<div class="a" style="left:57.9px;top:41.1px;width:12.3px;height:8.5px;background:#6a0a6a"></div>
<div class="a" style="left:72.0px;top:41.1px;width:12.3px;height:8.5px;background:#000092"></div>
<div class="a" style="left:86.1px;top:41.1px;width:12.3px;height:8.5px;background:#2262a2"></div>
<div class="a" style="left:100.2px;top:41.1px;width:12.3px;height:8.5px;background:#108232"></div>
<div class="a" style="left:1.5px;top:51.1px;width:12.3px;height:8.5px;background:#3a3a3a"></div>
<div class="a" style="left:15.6px;top:51.1px;width:12.3px;height:8.5px;background:#625232"></div>
<div class="a" style="left:29.7px;top:51.1px;width:12.3px;height:8.5px;background:#da6212"></div>
<div class="a" style="left:43.8px;top:51.1px;width:12.3px;height:8.5px;background:#824242"></div>
<div class="a" style="left:57.9px;top:51.1px;width:12.3px;height:8.5px;background:#724a6a"></div>
<div class="a" style="left:72.0px;top:51.1px;width:12.3px;height:8.5px;background:#000008"></div>
<div class="a" style="left:86.1px;top:51.1px;width:12.3px;height:8.5px;background:#3a3a4a"></div>
<div class="a" style="left:100.2px;top:51.1px;width:12.3px;height:8.5px;background:#005222"></div>
<div class="a" style="left:71.6px;top:10.8px;width:13px;height:9.2px;border:1px solid #f4f8ff;background:#1f8ff2;box-shadow:inset 0 0 0 1px #10386a"></div>
</div>
<div class="a" style="left:1176px;top:108.5px;width:104px;height:412px;background:#fff;border-left:1px solid #bdbdbd;border-top:1px solid #c6c6c6;border-bottom:1px solid #c6c6c6"></div>
<div class="a" style="left:1177px;top:110.2px;width:103px;height:13.7px;background:#3392f2"></div>
<svg class="a" style="left:1179px;top:112px" width="11" height="10"><path d="M1.5,5 Q5.5,1.5 9.5,5 Q5.5,8.5 1.5,5Z" fill="#cfe0f8" stroke="#123" stroke-width=".7"/><circle cx="5.5" cy="5" r="2.3" fill="#0c141c"/></svg>
<div class="a" style="left:1216.3px;top:112.2px;width:9px;height:9px;border-radius:50%;background:#8e959c;border:1px solid #2a3a48;box-shadow:0 0 0 0.7px #cfe2fa"></div>
<div class="a" style="left:1249.0px;top:112.6px;font-size:7.4px;line-height:8.51px;letter-spacing:-0.01px;color:#bcdcff;white-space:nowrap;-webkit-text-stroke:0.18px currentColor;">1. / 1</div>
<div class="a" style="left:1177.0px;top:523.8px;font-size:7.2px;line-height:8.28px;letter-spacing:-0.80px;color:#222;white-space:nowrap;-webkit-text-stroke:0.18px currentColor;">Parts</div>
<div class="a" style="left:1203.5px;top:526px;width:35px;height:3.5px;background:#dcdcdc;border-radius:1px"></div>
<div class="a" style="left:1249.5px;top:523.5px;width:8.5px;height:9px;border:1px solid #c8c8c8;background:linear-gradient(#fafafa,#e4e4e4)"></div>
<div class="a" style="left:1265.5px;top:523.5px;width:13px;height:9px;border:1px solid #777;background:linear-gradient(#fafafa,#dcdcdc)"></div>
<svg class="a" style="left:1267.5px;top:525px" width="9" height="6"><path d="M1,1 H8" stroke="#222" stroke-width="1"/><path d="M1.2,5.5 L4.5,2 L7.8,5.5 Z" fill="#222"/></svg>
<div class="a" style="left:1176px;top:534.5px;width:104px;height:54.5px;background:#fff;border:1px solid #c0c0c0;border-right:0"></div>
<div class="a" style="left:1176px;top:596px;width:104px;height:54px;background:#fff;border:1px solid #c0c0c0;border-right:0;border-bottom:0"></div>
<svg class="a" style="left:1231px;top:627px" width="10" height="10"><path d="M5,0 L6.2,3.8 L10,5 L6.2,6.2 L5,10 L3.8,6.2 L0,5 L3.8,3.8 Z" fill="#f5a000" stroke="#3a2400" stroke-width=".7"/></svg>
<div class="a" style="left:427.4px;top:139.8px;width:436.4px;height:395px;background:#cfcfcf;border:1px solid #484848;box-shadow:3px 3px 3.5px 1px rgba(0,0,0,.55),0 0 5px rgba(0,0,0,.4);border-radius:1px"></div>
<div class="a" style="left:428.4px;top:140.8px;width:434.4px;height:393px;border:1px solid #c9c9c9"></div>
<div class="a" style="left:429.5px;top:141.8px;width:432.5px;height:14.7px;background:linear-gradient(90deg,#e9e9e9 0%,#e3e3e3 14%,#bebebe 30%,#a9a9a9 45%,#aaaaaa 60%,#bdbdbd 80%,#cdcdcd 100%)"></div>
<div class="a" style="left:433.4px;top:144.6px;font-size:8.4px;line-height:9.66px;letter-spacing:-0.17px;color:#2a2a2a;white-space:nowrap;-webkit-text-stroke:0.18px currentColor;">Choose Color from Catalog</div>
<div class="a" style="left:848px;top:143.5px;width:12px;height:11px;border:1px solid #b86060;border-radius:2px;background:linear-gradient(#e2aaa6 0%,#d47e7a 45%,#c8605e 55%,#d27a74 100%)"></div>
<svg class="a" style="left:851px;top:146.5px" width="6" height="5"><path d="M0.8,0.6 L5.2,4.4 M5.2,0.6 L0.8,4.4" stroke="#fff" stroke-width="1.5"/></svg>
<div class="a" style="left:432px;top:156px;width:428.3px;height:374.3px;background:#f0f0f0;border:1px solid #5a5a5a"></div>
<div class="a" style="left:438.0px;top:164.3px;font-size:7.3px;line-height:8.39px;letter-spacing:-0.13px;color:#101010;white-space:nowrap;-webkit-text-stroke:0.18px currentColor;">Find</div>
<div class="a" style="left:439px;top:177px;width:231px;height:14px;background:#fff;border:1px solid #e2e3ea;border-top-color:#c4c6cc"></div>
<div class="a" style="left:676.7px;top:177.3px;width:83.69999999999993px;height:14.6px;border:1px solid #c3c7ca;border-radius:2px;background:#f4f4f4"></div>
<div class="a" style="left:703.8px;top:181.0px;font-size:7.3px;line-height:8.39px;letter-spacing:-0.10px;color:#9a9a9a;white-space:nowrap;-webkit-text-stroke:0.18px currentColor;">Previous</div>
<div class="a" style="left:768px;top:177.3px;width:84.5px;height:14.6px;border:1px solid #c3c7ca;border-radius:2px;background:#f4f4f4"></div>
<div class="a" style="left:801.5px;top:181.0px;font-size:7.3px;line-height:8.39px;letter-spacing:0.26px;color:#9a9a9a;white-space:nowrap;-webkit-text-stroke:0.18px currentColor;">Next</div>
<div class="a" style="left:438px;top:206px;width:415.5px;height:267px;background:#fff;border:1px solid #cfd0d4;border-top-color:#b8bac0"></div>
<div class="a" style="left:439px;top:207px;width:402px;height:14px;background:linear-gradient(#ffffff,#f7f8fa 60%,#f0f1f4);border-bottom:1px solid #e4e6ea"></div>
<div class="a" style="left:501px;top:207px;width:1px;height:14px;background:#eceef1"></div>
<div class="a" style="left:544px;top:207px;width:1px;height:14px;background:#eceef1"></div>
<div class="a" style="left:794.5px;top:207px;width:1px;height:14px;background:#eceef1"></div>
<div class="a" style="left:442.2px;top:210.7px;font-size:7.3px;line-height:8.39px;letter-spacing:-0.24px;color:#101010;white-space:nowrap;-webkit-text-stroke:0.18px currentColor;">Color</div>
<div class="a" style="left:503.3px;top:210.7px;font-size:7.3px;line-height:8.39px;letter-spacing:-0.25px;color:#101010;white-space:nowrap;-webkit-text-stroke:0.18px currentColor;">Number</div>
<div class="a" style="left:547.3px;top:210.7px;font-size:7.3px;line-height:8.39px;letter-spacing:-0.52px;color:#101010;white-space:nowrap;-webkit-text-stroke:0.18px currentColor;">Name</div>
<div class="a" style="left:797.6px;top:210.7px;font-size:7.3px;line-height:8.39px;letter-spacing:-0.24px;color:#101010;white-space:nowrap;-webkit-text-stroke:0.18px currentColor;">Mark</div>
<div class="a" style="left:439px;top:221px;width:402px;height:251.5px;overflow:hidden">
<div class="a" style="left:1px;top:1.1px;width:60.3px;height:13px;background:#0c9fd8;box-shadow:inset 0 0 0 1px rgba(0,70,110,.55)"></div>
<div class="a" style="left:65.4px;top:4.1px;font-size:7.3px;line-height:8.39px;letter-spacing:-0.38px;color:#101010;white-space:nowrap;-webkit-text-stroke:0.18px currentColor;">2190</div>
<div class="a" style="left:108.3px;top:4.1px;font-size:7.3px;line-height:8.39px;letter-spacing:-0.19px;color:#101010;white-space:nowrap;-webkit-text-stroke:0.18px currentColor;">Mid Windsor</div>
<div class="a" style="left:1px;top:15.2px;width:60.3px;height:13px;background:#0a6ecb"></div>
<div class="a" style="left:65.4px;top:18.2px;font-size:7.3px;line-height:8.39px;letter-spacing:-0.38px;color:#101010;white-space:nowrap;-webkit-text-stroke:0.18px currentColor;">1804</div>
<div class="a" style="left:108.3px;top:18.2px;font-size:7.3px;line-height:8.39px;letter-spacing:-0.27px;color:#101010;white-space:nowrap;-webkit-text-stroke:0.18px currentColor;">Dark Blue</div>
<div class="a" style="left:1px;top:29.4px;width:60.3px;height:13px;background:#6eb1e1"></div>
<div class="a" style="left:65.4px;top:32.4px;font-size:7.3px;line-height:8.39px;letter-spacing:-0.38px;color:#101010;white-space:nowrap;-webkit-text-stroke:0.18px currentColor;">1800</div>
<div class="a" style="left:108.3px;top:32.4px;font-size:7.3px;line-height:8.39px;letter-spacing:-0.13px;color:#101010;white-space:nowrap;-webkit-text-stroke:0.18px currentColor;">Ultra Blue</div>
<div class="a" style="left:1px;top:43.5px;width:60.3px;height:13px;background:#80a9c1"></div>
<div class="a" style="left:65.4px;top:46.5px;font-size:7.3px;line-height:8.39px;letter-spacing:-0.38px;color:#101010;white-space:nowrap;-webkit-text-stroke:0.18px currentColor;">1799</div>
<div class="a" style="left:108.3px;top:46.5px;font-size:7.3px;line-height:8.39px;letter-spacing:-0.22px;color:#101010;white-space:nowrap;-webkit-text-stroke:0.18px currentColor;">Pale Purple</div>
<div class="a" style="left:1px;top:57.7px;width:60.3px;height:13px;background:#a1bdd9"></div>
<div class="a" style="left:65.4px;top:60.7px;font-size:7.3px;line-height:8.39px;letter-spacing:-0.38px;color:#101010;white-space:nowrap;-webkit-text-stroke:0.18px currentColor;">1815</div>
<div class="a" style="left:108.3px;top:60.7px;font-size:7.3px;line-height:8.39px;letter-spacing:-0.12px;color:#101010;white-space:nowrap;-webkit-text-stroke:0.18px currentColor;">Cerulean</div>
<div class="a" style="left:1px;top:71.8px;width:60.3px;height:13px;background:#b5cde9"></div>
<div class="a" style="left:65.4px;top:74.8px;font-size:7.3px;line-height:8.39px;letter-spacing:-0.38px;color:#101010;white-space:nowrap;-webkit-text-stroke:0.18px currentColor;">1845</div>
<div class="a" style="left:108.3px;top:74.8px;font-size:7.3px;line-height:8.39px;letter-spacing:-0.17px;color:#101010;white-space:nowrap;-webkit-text-stroke:0.18px currentColor;">Light Blue</div>
<div class="a" style="left:1px;top:86.0px;width:60.3px;height:13px;background:#b9cde5"></div>
<div class="a" style="left:65.4px;top:89.0px;font-size:7.3px;line-height:8.39px;letter-spacing:-0.38px;color:#101010;white-space:nowrap;-webkit-text-stroke:0.18px currentColor;">1859</div>
<div class="a" style="left:108.3px;top:89.0px;font-size:7.3px;line-height:8.39px;letter-spacing:-0.18px;color:#101010;white-space:nowrap;-webkit-text-stroke:0.18px currentColor;">Azure Blue</div>
<div class="a" style="left:1px;top:100.1px;width:60.3px;height:13px;background:#8a929b"></div>
<div class="a" style="left:65.4px;top:103.1px;font-size:7.3px;line-height:8.39px;letter-spacing:-0.38px;color:#101010;white-space:nowrap;-webkit-text-stroke:0.18px currentColor;">1965</div>
<div class="a" style="left:108.3px;top:103.1px;font-size:7.3px;line-height:8.39px;letter-spacing:-0.17px;color:#101010;white-space:nowrap;-webkit-text-stroke:0.18px currentColor;">Steel Gray medium</div>
<div class="a" style="left:1px;top:114.3px;width:60.3px;height:13px;background:#35598f"></div>
<div class="a" style="left:65.4px;top:117.3px;font-size:7.3px;line-height:8.39px;letter-spacing:-0.38px;color:#101010;white-space:nowrap;-webkit-text-stroke:0.18px currentColor;">2193</div>
<div class="a" style="left:108.3px;top:117.3px;font-size:7.3px;line-height:8.39px;letter-spacing:-0.16px;color:#101010;white-space:nowrap;-webkit-text-stroke:0.18px currentColor;">Imperial Blue</div>
<div class="a" style="left:1px;top:128.4px;width:60.3px;height:13px;background:#a785dd"></div>
<div class="a" style="left:65.4px;top:131.4px;font-size:7.3px;line-height:8.39px;letter-spacing:-0.38px;color:#101010;white-space:nowrap;-webkit-text-stroke:0.18px currentColor;">1869</div>
<div class="a" style="left:108.3px;top:131.4px;font-size:7.3px;line-height:8.39px;letter-spacing:-0.08px;color:#101010;white-space:nowrap;-webkit-text-stroke:0.18px currentColor;">Lavender</div>
<div class="a" style="left:1px;top:142.5px;width:60.3px;height:13px;background:#b1d1d9"></div>
<div class="a" style="left:65.4px;top:145.6px;font-size:7.3px;line-height:8.39px;letter-spacing:-0.38px;color:#101010;white-space:nowrap;-webkit-text-stroke:0.18px currentColor;">1806</div>
<div class="a" style="left:108.3px;top:145.6px;font-size:7.3px;line-height:8.39px;letter-spacing:-0.12px;color:#101010;white-space:nowrap;-webkit-text-stroke:0.18px currentColor;">Crystal Blue</div>
<div class="a" style="left:1px;top:156.7px;width:60.3px;height:13px;background:#cdddE9"></div>
<div class="a" style="left:65.4px;top:159.7px;font-size:7.3px;line-height:8.39px;letter-spacing:-0.38px;color:#101010;white-space:nowrap;-webkit-text-stroke:0.18px currentColor;">1838</div>
<div class="a" style="left:108.3px;top:159.7px;font-size:7.3px;line-height:8.39px;letter-spacing:-0.16px;color:#101010;white-space:nowrap;-webkit-text-stroke:0.18px currentColor;">Cadet Blue</div>
<div class="a" style="left:1px;top:170.8px;width:60.3px;height:13px;background:#b591d9"></div>
<div class="a" style="left:65.4px;top:173.8px;font-size:7.3px;line-height:8.39px;letter-spacing:-0.38px;color:#101010;white-space:nowrap;-webkit-text-stroke:0.18px currentColor;">1875</div>
<div class="a" style="left:108.3px;top:173.8px;font-size:7.3px;line-height:8.39px;letter-spacing:-0.22px;color:#101010;white-space:nowrap;-webkit-text-stroke:0.18px currentColor;">Pale Purple</div>
<div class="a" style="left:1px;top:185.0px;width:60.3px;height:13px;background:#c1d5dd"></div>
<div class="a" style="left:65.4px;top:188.0px;font-size:7.3px;line-height:8.39px;letter-spacing:-0.38px;color:#101010;white-space:nowrap;-webkit-text-stroke:0.18px currentColor;">1790</div>
<div class="a" style="left:108.3px;top:188.0px;font-size:7.3px;line-height:8.39px;letter-spacing:-0.13px;color:#101010;white-space:nowrap;-webkit-text-stroke:0.18px currentColor;">Ocean Bleu Light</div>
<div class="a" style="left:1px;top:199.1px;width:60.3px;height:13px;background:#088990"></div>
<div class="a" style="left:65.4px;top:202.1px;font-size:7.3px;line-height:8.39px;letter-spacing:-0.38px;color:#101010;white-space:nowrap;-webkit-text-stroke:0.18px currentColor;">1841</div>
<div class="a" style="left:108.3px;top:202.1px;font-size:7.3px;line-height:8.39px;letter-spacing:-0.08px;color:#101010;white-space:nowrap;-webkit-text-stroke:0.18px currentColor;">M. D. Green</div>
<div class="a" style="left:1px;top:213.3px;width:60.3px;height:13px;background:#797979"></div>
<div class="a" style="left:65.4px;top:216.3px;font-size:7.3px;line-height:8.39px;letter-spacing:-0.38px;color:#101010;white-space:nowrap;-webkit-text-stroke:0.18px currentColor;">1966</div>
<div class="a" style="left:108.3px;top:216.3px;font-size:7.3px;line-height:8.39px;letter-spacing:-0.23px;color:#101010;white-space:nowrap;-webkit-text-stroke:0.18px currentColor;">Medium Grey</div>
<div class="a" style="left:1px;top:227.4px;width:60.3px;height:13px;background:#9969a1"></div>
<div class="a" style="left:65.4px;top:230.4px;font-size:7.3px;line-height:8.39px;letter-spacing:-0.38px;color:#101010;white-space:nowrap;-webkit-text-stroke:0.18px currentColor;">2104</div>
<div class="a" style="left:108.3px;top:230.4px;font-size:7.3px;line-height:8.39px;letter-spacing:0.01px;color:#101010;white-space:nowrap;-webkit-text-stroke:0.18px currentColor;">Hyacinth</div>
<div class="a" style="left:1px;top:241.6px;width:60.3px;height:13px;background:#b1e1e9"></div>
<div class="a" style="left:65.4px;top:244.6px;font-size:7.3px;line-height:8.39px;letter-spacing:-0.38px;color:#101010;white-space:nowrap;-webkit-text-stroke:0.18px currentColor;">2096</div>
<div class="a" style="left:108.3px;top:244.6px;font-size:7.3px;line-height:8.39px;letter-spacing:-0.17px;color:#101010;white-space:nowrap;-webkit-text-stroke:0.18px currentColor;">Light Blue</div>
</div>
<div class="a" style="left:841px;top:207px;width:12px;height:265.5px;background:#f1f1f1;border-left:1px solid #e8e8e8"></div>
<svg class="a" style="left:844.2px;top:212px" width="5" height="3.4"><path d="M0.2,3.2 L2.5,0.4 L4.8,3.2 Z" fill="#444"/></svg>
<div class="a" style="left:841.4px;top:219.8px;width:10.2px;height:9.8px;border:1px solid #b4b4b4;border-radius:1.5px;background:linear-gradient(90deg,#f4f4f4,#d2d2d2)"></div>
<svg class="a" style="left:844.2px;top:464.3px" width="5" height="3.4"><path d="M0.2,0.2 L2.5,3 L4.8,0.2 Z" fill="#444"/></svg>
<div class="a" style="left:473px;top:477px;width:27.5px;height:11.8px;border:1px solid #c6c6c6;border-top:0;background:linear-gradient(#f6f6f6,#dedede)"></div>
<div class="a" style="left:500px;top:477px;width:38.5px;height:11.8px;border:1px solid #c6c6c6;border-top:0;background:linear-gradient(#f6f6f6,#dedede)"></div>
<div class="a" style="left:439px;top:476.5px;width:34px;height:15px;border:1px solid #cfcfcf;border-top:0;background:#fff"></div>
<div class="a" style="left:439px;top:473px;width:414px;height:3.5px;background:linear-gradient(#c9c9c9,#e2e2e2)"></div>
<div class="a" style="left:443.6px;top:481.4px;font-size:7.3px;line-height:8.39px;letter-spacing:-0.22px;color:#101010;white-space:nowrap;-webkit-text-stroke:0.18px currentColor;">Normal</div>
<div class="a" style="left:476.3px;top:480.2px;font-size:7.3px;line-height:8.39px;letter-spacing:-0.93px;color:#101010;white-space:nowrap;-webkit-text-stroke:0.18px currentColor;">3D</div>
<div class="a" style="left:505.0px;top:480.2px;font-size:7.3px;line-height:8.39px;letter-spacing:-0.15px;color:#101010;white-space:nowrap;-webkit-text-stroke:0.18px currentColor;">3D Matte</div>
<div class="a" style="left:438.3px;top:497.5px;font-size:7.3px;line-height:8.39px;letter-spacing:0.02px;color:#101010;white-space:nowrap;-webkit-text-stroke:0.18px currentColor;">Sort on:</div>
<div class="a" style="left:528.0px;top:497.5px;font-size:7.3px;line-height:8.39px;letter-spacing:-0.03px;color:#101010;white-space:nowrap;-webkit-text-stroke:0.18px currentColor;">Catalog</div>
<div class="a" style="left:584.5px;top:496.7px;width:8px;height:8px;border:1px solid #8e8f8f;background:linear-gradient(135deg,#e6e6e6,#fdfdfd)"></div>
<div class="a" style="left:594.8px;top:497.5px;font-size:7.3px;line-height:8.39px;letter-spacing:-0.14px;color:#101010;white-space:nowrap;-webkit-text-stroke:0.18px currentColor;">Marked Only</div>
<div class="a" style="left:438.3px;top:508.5px;width:84.40000000000003px;height:14.2px;border:1px solid #a4a4a4;border-radius:2.5px;background:linear-gradient(#f4f4f4 0%,#ebebeb 48%,#dddddd 52%,#d0d0d0 100%);box-shadow:inset 0 0 0 1px rgba(255,255,255,.6)"></div>
<div class="a" style="left:441.0px;top:512.4px;font-size:7.3px;line-height:8.39px;letter-spacing:-0.21px;color:#101010;white-space:nowrap;-webkit-text-stroke:0.18px currentColor;">Color</div>
<svg class="a" style="left:513.2px;top:514px" width="6" height="4"><path d="M0.2,0.3 H5.8 L3,3.7 Z" fill="#111"/></svg>
<div class="a" style="left:528px;top:508.5px;width:138.79999999999995px;height:14.2px;border:1px solid #a4a4a4;border-radius:2.5px;background:linear-gradient(#f4f4f4 0%,#ebebeb 48%,#dddddd 52%,#d0d0d0 100%);box-shadow:inset 0 0 0 1px rgba(255,255,255,.6)"></div>
<div class="a" style="left:530.8px;top:512.4px;font-size:7.3px;line-height:8.39px;letter-spacing:-0.01px;color:#101010;white-space:nowrap;-webkit-text-stroke:0.18px currentColor;">Metro</div>
<svg class="a" style="left:657.3px;top:514px" width="6" height="4"><path d="M0.2,0.3 H5.8 L3,3.7 Z" fill="#111"/></svg>
<div class="a" style="left:673px;top:504.3px;width:70.5px;height:18.6px;border:1px solid #3c7fb1;border-radius:3px;background:linear-gradient(#f4f8fb 0%,#e8eef2 48%,#d6dde3 52%,#cfd5da 100%);box-shadow:inset 0 0 0 1px #9bdcf4"></div>
<svg class="a" style="left:701px;top:507.5px" width="15" height="12"><path d="M1.5,6.5 L5.5,10 L13,2" fill="none" stroke="#1a8a1a" stroke-width="2.4" stroke-linecap="round" stroke-linejoin="round"/></svg>
<div class="a" style="left:750.5px;top:504.3px;width:76.7px;height:18.6px;border:1px solid #9a9a9a;border-radius:3px;background:linear-gradient(#f5f5f5 0%,#ebebeb 48%,#dcdcdc 52%,#cfcfcf 100%);box-shadow:inset 0 0 0 1px rgba(255,255,255,.7)"></div>
<svg class="a" style="left:783.5px;top:508.3px" width="10" height="11" viewBox="0.5 0 10 11" preserveAspectRatio="none"><path d="M1.8,1.8 L9.2,9.2 M9.2,1.8 L1.8,9.2" fill="none" stroke="#8e0a16" stroke-width="2.6" stroke-linecap="round"/></svg>
<div class="a" style="left:834.2px;top:504.3px;width:18.6px;height:18.7px;border:1px solid #a6a6a6;border-radius:2px;background:linear-gradient(#f5f5f5 0%,#ebebeb 48%,#dcdcdc 52%,#d2d2d2 100%)"></div>
<svg class="a" style="left:837.7px;top:508.6px" width="11.4" height="10.4" viewBox="0 0 13 11" preserveAspectRatio="none"><path d="M3.5,4 L4.5,1 H10 L10.5,4" fill="#fff" stroke="#1a1a1a" stroke-width="1.1"/><rect x="1" y="4" width="11" height="5" rx="1.5" fill="#eee" stroke="#1a1a1a" stroke-width="1.2"/><path d="M3,9.5 H10.5 M3.5,6.5 H9" stroke="#1a1a1a" stroke-width="1.1"/></svg>
<svg class="a" style="left:690px;top:428px" width="24" height="28" viewBox="690 428 24 28"><path d="M696.6,432.6 V447.2 L699.8,444.6 L702.9,451.2 L705.9,450 L703.2,443.6 H707.3 Z" fill="#fff" stroke="#000" stroke-width="1.25" stroke-linejoin="miter"/></svg>
</div></div></body></html>
